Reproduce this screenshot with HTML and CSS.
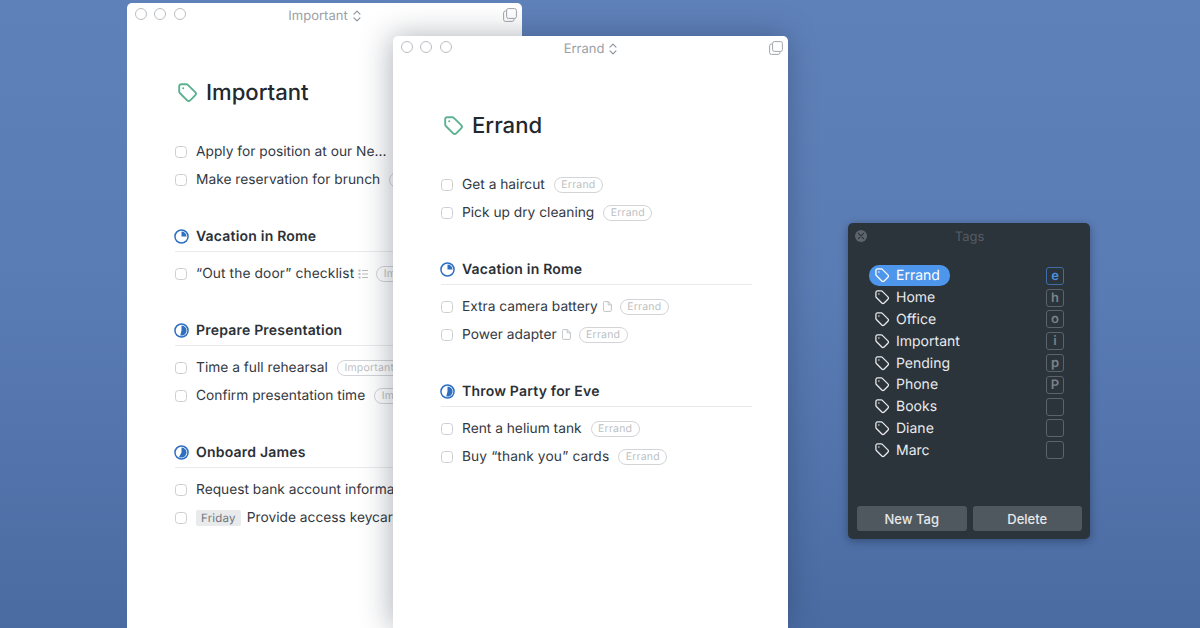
FILE: index.html
```html
<!DOCTYPE html>
<html lang="en">
<head>
<meta charset="utf-8">
<title>Tags</title>
<link rel="stylesheet" href="styles.css">
</head>
<body>
<svg class="defs" width="0" height="0" aria-hidden="true">
  <defs>
    <symbol id="tag" viewBox="0 0 20 20">
      <path d="M3.2 1.2h5.2a2 2 0 0 1 1.4.6l7.4 7.4a2.2 2.2 0 0 1 0 3.1l-5 5a2.2 2.2 0 0 1-3.1 0L1.8 10a2 2 0 0 1-.6-1.4V3.2a2 2 0 0 1 2-2z" fill="none" stroke="currentColor" stroke-linejoin="round"/>
      <circle cx="5.2" cy="5.2" r="1" fill="currentColor"/>
    </symbol>
    <symbol id="stepper" viewBox="0 0 8 12">
      <path d="M1 4.2 4 1.2l3 3M1 7.8l3 3 3-3" fill="none" stroke="currentColor" stroke-width="1.1" stroke-linecap="round" stroke-linejoin="round"/>
    </symbol>
    <symbol id="copy" viewBox="0 0 14 14">
      <rect x="3.6" y=".6" width="9.8" height="9.8" rx="1.8" fill="none" stroke="currentColor" stroke-width="1"/>
      <path d="M3.6 3H2.4A1.8 1.8 0 0 0 .6 4.8v6.8a1.8 1.8 0 0 0 1.8 1.8h6.8a1.8 1.8 0 0 0 1.8-1.8v-1.2" fill="none" stroke="currentColor" stroke-width="1"/>
    </symbol>
    <symbol id="note" viewBox="0 0 9 11">
      <path d="M1.4.6h4l3 3v5.8a1 1 0 0 1-1 1H1.4a1 1 0 0 1-1-1V1.6a1 1 0 0 1 1-1zM5.2.8v3h3" fill="none" stroke="currentColor" stroke-width=".9"/>
    </symbol>
    <symbol id="list" viewBox="0 0 10 10">
      <path d="M4 1.5h6M4 5h6M4 8.5h6" stroke="currentColor" stroke-width="1" fill="none"/>
      <path d="M.5.5h2v2h-2zM.5 4h2v2h-2zM.5 7.5h2v2h-2z" fill="currentColor"/>
    </symbol>
    <symbol id="pie-quarter" viewBox="0 0 16 16">
      <circle cx="8" cy="8" r="7" fill="none" stroke="currentColor" stroke-width="1.6"/>
      <path d="M8 2.6A5.4 5.4 0 0 1 13.4 8H8z" fill="currentColor"/>
    </symbol>
    <symbol id="pie-half-plus" viewBox="0 0 16 16">
      <circle cx="8" cy="8" r="7" fill="none" stroke="currentColor" stroke-width="1.6"/>
      <path d="M8 2.6a5.4 5.4 0 1 1-1.4 10.6L8 8z" fill="currentColor"/>
    </symbol>
    <symbol id="pie-most" viewBox="0 0 16 16">
      <circle cx="8" cy="8" r="7" fill="none" stroke="currentColor" stroke-width="1.6"/>
      <path d="M8 2.6a5.4 5.4 0 1 1-2.7 10.1L8 8z" fill="currentColor"/>
    </symbol>
  </defs>
</svg>

<section class="window window-back">
  <header class="titlebar">
    <span class="lights"><i></i><i></i><i></i></span>
    <span class="wintitle">Important <svg class="stepper"><use href="#stepper"/></svg></span>
    <svg class="copy"><use href="#copy"/></svg>
  </header>
  <div class="body">
    <h1 class="heading"><svg class="heading-tag"><use href="#tag"/></svg>Important</h1>
    <ul class="items">
      <li class="item"><span class="check"></span><span class="text">Apply for position at our Ne...</span></li>
      <li class="item"><span class="check"></span><span class="text">Make reservation for brunch</span><span class="pill">Important</span></li>
    </ul>
    <h2 class="project"><svg class="pie"><use href="#pie-quarter"/></svg>Vacation in Rome</h2>
    <ul class="items">
      <li class="item"><span class="check"></span><span class="text quoted">“Out the door” checklist</span><svg class="mini list"><use href="#list"/></svg><span class="pill">Important</span></li>
    </ul>
    <h2 class="project"><svg class="pie"><use href="#pie-half-plus"/></svg>Prepare Presentation</h2>
    <ul class="items">
      <li class="item"><span class="check"></span><span class="text">Time a full rehearsal</span><span class="pill">Important</span></li>
      <li class="item"><span class="check"></span><span class="text">Confirm presentation time</span><span class="pill">Important</span></li>
    </ul>
    <h2 class="project"><svg class="pie"><use href="#pie-most"/></svg>Onboard James</h2>
    <ul class="items">
      <li class="item"><span class="check"></span><span class="text">Request bank account information</span></li>
      <li class="item"><span class="check"></span><span class="when">Friday</span><span class="text">Provide access keycard</span></li>
    </ul>
  </div>
</section>

<section class="window window-front">
  <header class="titlebar">
    <span class="lights"><i></i><i></i><i></i></span>
    <span class="wintitle">Errand <svg class="stepper"><use href="#stepper"/></svg></span>
    <svg class="copy"><use href="#copy"/></svg>
  </header>
  <div class="body">
    <h1 class="heading"><svg class="heading-tag"><use href="#tag"/></svg>Errand</h1>
    <ul class="items">
      <li class="item"><span class="check"></span><span class="text">Get a haircut</span><span class="pill">Errand</span></li>
      <li class="item"><span class="check"></span><span class="text">Pick up dry cleaning</span><span class="pill">Errand</span></li>
    </ul>
    <h2 class="project"><svg class="pie"><use href="#pie-quarter"/></svg>Vacation in Rome</h2>
    <ul class="items">
      <li class="item"><span class="check"></span><span class="text">Extra camera battery</span><svg class="mini note"><use href="#note"/></svg><span class="pill">Errand</span></li>
      <li class="item"><span class="check"></span><span class="text">Power adapter</span><svg class="mini note"><use href="#note"/></svg><span class="pill">Errand</span></li>
    </ul>
    <h2 class="project"><svg class="pie"><use href="#pie-half-plus"/></svg>Throw Party for Eve</h2>
    <ul class="items">
      <li class="item"><span class="check"></span><span class="text">Rent a helium tank</span><span class="pill">Errand</span></li>
      <li class="item"><span class="check"></span><span class="text quoted">Buy “thank you” cards</span><span class="pill">Errand</span></li>
    </ul>
  </div>
</section>

<aside class="panel">
  <header class="panel-title">
    <span class="close">
      <svg viewBox="0 0 12 12"><path d="M3.4 3.4l5.2 5.2M8.6 3.4l-5.2 5.2" stroke="currentColor" stroke-width="1.1" stroke-linecap="round"/></svg>
    </span>
    Tags
  </header>
  <ul class="tags">
    <li class="tag"><span class="tag-name selected"><svg class="tag-icon"><use href="#tag"/></svg>Errand</span><kbd class="key key-active">e</kbd></li>
    <li class="tag"><span class="tag-name"><svg class="tag-icon"><use href="#tag"/></svg>Home</span><kbd class="key">h</kbd></li>
    <li class="tag"><span class="tag-name"><svg class="tag-icon"><use href="#tag"/></svg>Office</span><kbd class="key">o</kbd></li>
    <li class="tag"><span class="tag-name"><svg class="tag-icon"><use href="#tag"/></svg>Important</span><kbd class="key">i</kbd></li>
    <li class="tag"><span class="tag-name"><svg class="tag-icon"><use href="#tag"/></svg>Pending</span><kbd class="key">p</kbd></li>
    <li class="tag"><span class="tag-name"><svg class="tag-icon"><use href="#tag"/></svg>Phone</span><kbd class="key">P</kbd></li>
    <li class="tag"><span class="tag-name"><svg class="tag-icon"><use href="#tag"/></svg>Books</span><kbd class="key"></kbd></li>
    <li class="tag"><span class="tag-name"><svg class="tag-icon"><use href="#tag"/></svg>Diane</span><kbd class="key"></kbd></li>
    <li class="tag"><span class="tag-name"><svg class="tag-icon"><use href="#tag"/></svg>Marc</span><kbd class="key"></kbd></li>
  </ul>
  <footer class="panel-actions">
    <button class="btn" type="button">New Tag</button>
    <button class="btn" type="button">Delete</button>
  </footer>
</aside>
</body>
</html>
```

FILE: styles.css
```css
* { box-sizing: border-box; }
html, body { margin: 0; padding: 0; height: 100%; }
body {
  position: relative;
  width: 1200px;
  height: 628px;
  overflow: hidden;
  background: linear-gradient(180deg, #5f81ba 0%, #5a7cb4 45%, #4a6ba2 100%);
  font-family: Inter, "Liberation Sans", sans-serif;
  color: #24292f;
  text-rendering: geometricPrecision;
}
.defs { position: absolute; }
ul { list-style: none; margin: 0; padding: 0; }

.window {
  position: absolute;
  bottom: 0;
  width: 395px;
  background: #fff;
  border-radius: 5px 5px 0 0;
  overflow: hidden;
}
.window-back { left: 127px; top: 3px; }
.window-front { left: 393px; top: 36px; box-shadow: -2px 0 30px rgba(20,30,50,.34); }

.titlebar {
  position: relative;
  height: 25px;
  display: flex;
  align-items: center;
  justify-content: center;
}
.lights {
  position: absolute;
  left: 7.7px;
  top: 5px;
  display: flex;
  gap: 7.8px;
}
.lights i {
  width: 12px;
  height: 12px;
  border-radius: 50%;
  border: 1.2px solid #babdc1;
}
.wintitle {
  display: flex;
  align-items: center;
  gap: 5px;
  margin-top: 1px;
  font-size: 13px;
  color: #9aa0a8;
}
.stepper { width: 8px; height: 12px; color: #8a9099; }
.copy {
  position: absolute;
  right: 5px;
  top: 5px;
  width: 14px;
  height: 14px;
  color: #a0a5ab;
}

.body { padding: 51px 36px 0 48px; }
.heading {
  display: flex;
  align-items: center;
  margin: 0 0 31px;
  height: 28px;
  font-size: 22.1px;
  line-height: 28px;
  font-weight: 500;
  color: #23282e;
}
.heading-tag {
  width: 20px;
  height: 20px;
  margin: -1px 8px 0 3px;
  color: #5cb190;
  stroke-width: 1.9;
}
.item {
  display: flex;
  align-items: center;
  height: 28px;
  font-size: 13.75px;
  white-space: nowrap;
  color: #33383f;
}
.quoted { letter-spacing: .11px; }
.check {
  flex: none;
  width: 12px;
  height: 12px;
  margin-right: 9px;
  border: 1.2px solid #ccced1;
  border-radius: 3.5px;
}
.pill {
  flex: none;
  margin-left: 9px;
  height: 16px;
  padding: 0 6.5px;
  border: 1px solid #d2d4d7;
  border-radius: 8px;
  font-size: 10.5px;
  line-height: 14px;
  color: #bcbfc3;
  letter-spacing: .2px;
}
.mini { flex: none; margin-left: 5px; color: #b9bcc0; }
.mini.note { width: 9px; height: 11px; margin-top: -1px; }
.mini.list { width: 10px; height: 10px; margin-left: 4px; }
.mini + .pill { margin-left: 8px; }
.when {
  flex: none;
  margin-right: 6px;
  padding: 0 5px;
  height: 16px;
  border-radius: 2px;
  background: #e8eaec;
  font-size: 11.5px;
  line-height: 16px;
  letter-spacing: .2px;
  color: #70767e;
}
.project {
  display: flex;
  align-items: center;
  height: 28px;
  margin: 30px 0 8px;
  padding-bottom: 3px;
  border-bottom: 1px solid #e9eaec;
  font-size: 14px;
  letter-spacing: .2px;
  font-weight: 600;
  color: #2b3037;
}
.pie {
  width: 15px;
  height: 15px;
  margin-right: 7px;
  margin-left: -1px;
  color: #2f6fc0;
}

.panel {
  position: absolute;
  left: 848px;
  top: 223px;
  width: 242px;
  height: 316px;
  display: flex;
  flex-direction: column;
  padding: 0 8px 8px 9px;
  border-radius: 5px;
  background: #2b333b;
  box-shadow: 0 2px 8px rgba(15,25,45,.4);
}
.panel-title {
  position: relative;
  height: 42px;
  padding-top: 6.6px;
  text-align: center;
  font-size: 13px;
  line-height: 15px;
  color: #555c63;
}
.close {
  position: absolute;
  left: -2px;
  top: 7px;
  width: 12px;
  height: 12px;
  border-radius: 50%;
  background: #5d646b;
  color: #2b333b;
}
.close svg { display: block; width: 12px; height: 12px; }
.tags { padding: 0 18px 0 12px; }
.tag {
  display: flex;
  align-items: center;
  justify-content: space-between;
  height: 21.8px;
  font-size: 14px;
  color: #e9ebed;
}
.tag-name {
  display: flex;
  align-items: center;
  height: 21px;
  padding: 0 10px 0 6px;
  border-radius: 10px;
}
.tag-name.selected { background: #4d96ec; color: #fff; }
.tag-icon { width: 15px; height: 15px; margin-right: 6px; stroke-width: 1.7; }
.key {
  display: flex;
  align-items: center;
  justify-content: center;
  width: 18px;
  height: 18px;
  border: 1.3px solid #5c6369;
  border-radius: 3px;
  font-family: Inter, "Liberation Sans", sans-serif;
  font-size: 13px;
  font-weight: 600;
  color: #7b8188;
}
.key-active { border-color: #3d6ea8; color: #4d8fdc; }
.panel-actions {
  display: flex;
  gap: 6px;
  margin-top: auto;
}
.btn {
  flex: 1;
  height: 25px;
  padding: 0;
  border: 0;
  border-radius: 3px;
  background: #50585f;
  font-family: Inter, "Liberation Sans", sans-serif;
  font-size: 13px;
  font-weight: 500;
  color: #e6e8ea;
}
```
